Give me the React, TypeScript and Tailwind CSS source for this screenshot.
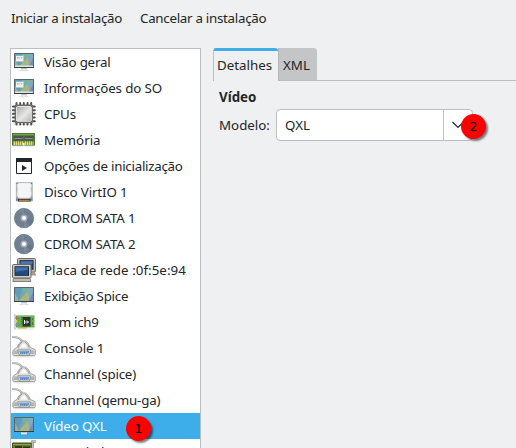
import React from 'react';

type IconProps = { children: React.ReactNode };

function Glyph({ children }: IconProps) {
  return (
    <svg width="24" height="24" viewBox="0 0 24 24" className="block shrink-0">
      {children}
    </svg>
  );
}

function Monitor({ desktop = false }: { desktop?: boolean }) {
  return (
    <Glyph>
      <ellipse cx="12" cy="20.5" rx="5" ry=".8" fill="#000" opacity=".12" />
      <path d="M9 18h6v2.500H9z" fill="#e3e5e8" />
      <path d="M9 18h6v.8H9z" fill="#b9bdc2" />
      <rect x="2" y="3" width="20" height="15" rx=".6" fill="#56666a" />
      <path d="M2 17h20v1H2z" fill="#363d43" />
      <path d="M3 4h18v13H3z" fill="#74a5ab" />
      <path d="M3 4h7l-3 13H3z" fill="#6499bd" />
      <path d="M10 4h6l-4 7z" fill="#6fb59a" />
      <path d="M7 17l5-6 3 6z" fill="#a3bb80" />
      <path d="M16 4l-4 7 5 6 4-9V4z" fill="#82abb8" />
      <path d="M12 11l4-3 1 9h-2z" fill="#b8b27a" />
      <path d="M17 17l4-9v9z" fill="#6e8dba" />
      <path d="M3 9l4 8H3z" fill="#8ab69d" />
      {desktop && (
        <>
          <path d="M4 5h7.500v6.500H4z" fill="#eef2f3" />
          <path d="M4 5h7.500v1H4z" fill="#7fb3dd" />
          <path d="M5 7h1.500v1.500H5z" fill="#e7a056" />
          <path d="M7.300 7h1.200v1.500H7.300z" fill="#e6cf60" />
          <path d="M9.200 7h1v1.500h-1z" fill="#8bc879" />
          <path d="M3 15.500h18V17H3z" fill="#dde5e5" />
        </>
      )}
    </Glyph>
  );
}

function Cpu() {
  return (
    <Glyph>
      <defs>
        <linearGradient id="cpuFace" x1="0" y1="0" x2="1" y2="1">
          <stop offset="0" stopColor="#a9a9a7" />
          <stop offset=".55" stopColor="#e6e6e4" />
          <stop offset="1" stopColor="#b4b4b2" />
        </linearGradient>
      </defs>
      <path d="M2 21h20v2.500H2z" fill="#000" opacity=".1" />
      <path
        d="M4.500 1v21.500M8.200 1v21.500M11.800 1v21.500M15.500 1v21.500M19.200 1v21.500M.8 4.500h22M.8 8.200h22M.8 11.800h22M.8 15.500h22M.8 19.200h22"
        stroke="#4d4e4a"
        strokeWidth="1.900"
        strokeLinecap="round"
      />
      <rect x="2.600" y="2.600" width="18.400" height="18.400" rx="1.500" fill="#6b6c68" />
      <rect x="4.500" y="4.500" width="14.800" height="14.800" rx="1" fill="url(#cpuFace)" stroke="#ecece9" strokeWidth=".9" />
    </Glyph>
  );
}

function Memory() {
  return (
    <Glyph>
      <path d="M1 17h22v1.500H1z" fill="#000" opacity=".12" />
      <path d="M0 5h23v12.500H0z" fill="#4b7435" />
      <path d="M1 6h21v1.200H1z" fill="#7aa653" />
      <path d="M2 8h9v4.500H2zM12.500 8h8.500v4.500h-8.500z" fill="#50524f" />
      <path d="M2.500 10h8v1h-8zM13 10h7.500v1H13z" fill="#8c908c" />
      <path d="M1 13.500h21V17H1z" fill="#8caa45" />
      <path
        d="M2.500 13.500V17M4.500 13.500V17M6.500 13.500V17M8.500 13.500V17M10.500 13.500V17M13.500 13.500V17M15.500 13.500V17M17.500 13.500V17M19.500 13.500V17"
        stroke="#e2d979"
        strokeWidth="1"
      />
      <path d="M11 15h1.500v2.500H11z" fill="#e9eee3" />
    </Glyph>
  );
}

function Boot() {
  return (
    <Glyph>
      <path d="M4.500 4.500h15v15h-15z" fill="#fcfcfc" stroke="#232629" />
      <path d="M4 4h16v4H4z" fill="#232629" />
      <path d="M10 11l5 3-5 3z" fill="#232629" />
    </Glyph>
  );
}

function Disk() {
  return (
    <Glyph>
      <rect x="3.800" y="2" width="17" height="19.500" rx="1" fill="#b1b3b3" />
      <path d="M4 17.500h16.500v3.500H4z" fill="#97999b" />
      <path
        d="M7.500 3h9.500q2.300 0 2.300 3l-.6 3 .6 4.500q-.3 4.500-3 4.500H8.200q-3 0-3-4.500l.6-4.500-.6-3q0-3 2.300-3z"
        fill="#f4f5f7"
        stroke="#dfe1e4"
        strokeWidth=".6"
      />
      <path d="M6 19h12.500v2.500H6z" fill="#353331" />
      <path d="M7 19.800h10.500v1H7z" fill="#d9952e" />
      <path d="M4.500 3h1v1h-1zM19 3h1v1h-1zM4.500 19h1v1h-1zM19 19h1v1h-1z" fill="#74777a" />
    </Glyph>
  );
}

function Cd() {
  return (
    <Glyph>
      <circle cx="12" cy="12.400" r="9.900" fill="#4c5965" opacity=".5" />
      <circle cx="12" cy="12" r="9.900" fill="#708090" />
      <path d="M12 12L8 3a10 10 0 0 1 4-.9zM12 12l4 9a10 10 0 0 1-4 .9z" fill="#798998" />
      <path d="M14 14l5 5a10 10 0 0 0 2.700-5L15 12z" fill="#677787" />
      <circle cx="12" cy="12" r="3.500" fill="#a2adb8" />
      <circle cx="12" cy="12" r="2" fill="#fff" />
    </Glyph>
  );
}

function Network() {
  return (
    <Glyph>
      <rect x="5.500" y=".5" width="18" height="13.500" rx="1" fill="#bdbdb3" stroke="#6d6d66" />
      <rect x="8" y="2.700" width="13" height="8.500" fill="#264d87" stroke="#1b2738" />
      <path d="M8.500 3.200h12v2.500l-12 2z" fill="#4974ae" />
      <path d="M16.500 14h6.500l1 3.500h-7.500z" fill="#9c9c93" />
      <rect x=".5" y="6.500" width="18.500" height="13.500" rx="1" fill="#cecec5" stroke="#686861" />
      <rect x="3" y="8.800" width="13.500" height="8.500" fill="#204b8a" stroke="#1b2738" />
      <path d="M3.500 9.300H16v2.500l-12.500 2z" fill="#4371ad" />
      <path d="M1.500 20.500H18l1 3H.8z" fill="#bcbcb3" stroke="#6d6d66" strokeWidth=".8" />
    </Glyph>
  );
}

function Sound() {
  return (
    <Glyph>
      <path d="M3 18.500h19v1H3z" fill="#000" opacity=".12" />
      <path d="M4 5.500h18.500v12H4z" fill="#69a94f" />
      <path d="M4 5.500h18.500v1H4z" fill="#8bc575" />
      <path d="M6 17h9v1.500H6z" fill="#b4b35a" />
      <path d="M2.300 4h1.200v15.500H2.300z" fill="#b5b8b6" />
      <path d="M3.500 6.500h2V9h-2z" fill="#e05067" />
      <path d="M3.500 10h2v2.500h-2z" fill="#e7c844" />
      <path d="M3.500 13.500h2v2.500h-2z" fill="#4ca4ca" />
      <path d="M9 7h1v1H9zM9 9h1v1H9zM9 11h1v1H9zM9 13h1v1H9z" fill="#417c35" />
      <path d="M10.500 7h8v9.500h-8z" fill="#26372c" />
      <path d="M12.500 10v4M12.500 12h3.500M15 10.500l1.500 1.500-1.500 1.500" stroke="#eef2ee" strokeWidth="1" fill="none" />
      <path d="M20 8h1v2h-1zM20 12h1v3h-1z" fill="#417c35" />
    </Glyph>
  );
}

function Serial() {
  return (
    <Glyph>
      <ellipse cx="12" cy="20.500" rx="11" ry="1" fill="#000" opacity=".12" />
      <path d="M0 1c5.500 0 9 1 10.500 5" fill="none" stroke="#a4a6a3" strokeWidth="2.200" />
      <path d="M0 .8c5.500 0 9 1.200 10.300 5" fill="none" stroke="#e0e1df" strokeWidth=".8" />
      <path
        d="M9.500 5h4q3 1.500 5 6.500l4.500 2q1 .8.800 2.500v2.500q-.5 1-2 1h-19.500q-1.300 0-1.500-1V16q0-1.800 1-2.500l3-2q2-4 4.700-6.500z"
        fill="#dcddda"
        stroke="#90928e"
        strokeWidth=".8"
      />
      <path d="M10 6q-3 2.500-4 6M13 6q3 2.500 4.500 6" fill="none" stroke="#9b9d99" strokeWidth="1" />
      <path d="M8 11.500l2.500-4h2.500l2.500 4z" fill="#f9f9f8" />
      <path d="M1.500 14.500h4.500v3.500H1.500zM18 14.500h4.500v3.500H18z" fill="#b3b5b2" />
      <path d="M5.800 13.800h12.800l-1.300 5.200H7.200z" fill="#ededeb" stroke="#7b7d79" strokeWidth=".7" />
      <path d="M7.200 14.800h10l-.8 3.200H8.200z" fill="#5586c6" />
      <path d="M8.500 15.600h8M9 17.200h7" stroke="#c8dcf4" strokeWidth=".7" strokeDasharray="1 1" />
    </Glyph>
  );
}

function Controller() {
  return (
    <Glyph>
      <path d="M.5 3h19v15H.5z" fill="#697a2c" stroke="#3f4c1c" />
      <path d="M1 4h18v1H1z" fill="#8d9d4b" />
      <path d="M3 6h7v4H3z" fill="#2c3618" />
      <path d="M11 6.500h7v5h-7z" fill="#29321a" />
      <path d="M24 1.500h-3.500v20" fill="none" stroke="#6e716e" strokeWidth="2.200" />
      <path d="M24 1.500h-3.500v20" fill="none" stroke="#cfd1ce" strokeWidth=".8" />
    </Glyph>
  );
}

const hardware = [
  { label: 'Visão geral', icon: <Monitor desktop />, spacing: 'tracking-[-0.2px]' },
  { label: 'Informações do SO', icon: <Monitor desktop />, spacing: 'tracking-[-0.12px]' },
  { label: 'CPUs', icon: <Cpu />, spacing: 'tracking-[-0.2px]' },
  { label: 'Memória', icon: <Memory />, spacing: 'tracking-normal' },
  { label: 'Opções de inicialização', icon: <Boot />, spacing: 'tracking-[-0.26px]' },
  { label: 'Disco VirtIO 1', icon: <Disk />, spacing: 'tracking-[-0.12px]' },
  { label: 'CDROM SATA 1', icon: <Cd />, spacing: 'tracking-[-0.16px]' },
  { label: 'CDROM SATA 2', icon: <Cd />, spacing: 'tracking-[-0.16px]' },
  { label: 'Placa de rede :0f:5e:94', icon: <Network />, spacing: 'tracking-[0.05px]' },
  { label: 'Exibição Spice', icon: <Monitor />, spacing: 'tracking-[-0.26px]' },
  { label: 'Som ich9', icon: <Sound />, spacing: 'tracking-[-0.3px]' },
  { label: 'Console 1', icon: <Serial />, spacing: 'tracking-[-0.1px]' },
  { label: 'Channel (spice)', icon: <Serial />, spacing: 'tracking-[-0.2px]' },
  { label: 'Channel (qemu-ga)', icon: <Serial />, spacing: 'tracking-[-0.18px]' },
  { label: 'Vídeo QXL', icon: <Monitor />, spacing: 'tracking-[-0.1px]', selected: true },
  { label: 'Controlador USB 0', icon: <Controller />, spacing: 'tracking-[-0.2px]' },
];

const badge =
  "absolute flex size-[25px] items-center justify-center rounded-full bg-[#ff0000] font-['DejaVu_Sans',sans-serif] text-[13px] leading-none text-black shadow-[2px_2px_2px_rgba(0,0,0,0.5)]";

export default function App() {
  return (
    <div className="flex h-[448px] w-[516px] flex-col overflow-hidden bg-[#eff0f1] font-['Noto_Sans',sans-serif] text-[13.333px] leading-[18px] text-[#232629]">
      <header className="flex h-12 shrink-0 gap-[18px] pt-[9px] pl-[11px] tracking-[-0.28px]">
        <span>Iniciar a instalação</span>
        <span>Cancelar a instalação</span>
      </header>
      <div className="flex min-h-0 flex-1 pl-[10px]">
        <ul className="w-[191px] shrink-0 overflow-hidden border border-b-0 border-[#bcbebf] bg-white">
          {hardware.map(({ label, icon, spacing, selected }) => (
            <li
              key={label}
              className={`relative flex h-[26px] items-center gap-2 pl-px whitespace-nowrap ${selected ? 'bg-[#3daee9] text-[#fcfcfc]' : ''}`}
            >
              {icon}
              <span className={spacing}>{label}</span>
              {selected && <span className={`${badge} top-[3px] left-[115px]`}>1</span>}
            </li>
          ))}
        </ul>
        <main className="ml-3 flex-1">
          <div className="flex h-[33px] border-b border-[#bcbebf]">
            <div className="-mb-px flex h-[33px] w-[65px] items-start rounded-t-[3px] border-t-[3px] border-l border-t-[#3daee9] border-l-[#bcbebf] bg-[#eff0f1] pt-[5px] pl-[3px]">
              Detalhes
            </div>
            <div className="flex h-8 w-[39px] items-start rounded-tr-[3px] border-l border-[#b4b6b7] bg-[#c4c5c6] pt-2 pl-1">
              XML
            </div>
          </div>
          <div className="pt-[7px] pl-[6px]">
            <h2 className="font-bold">Vídeo</h2>
            <div className="mt-[3px] flex items-center">
              <span className="w-[57px]">Modelo:</span>
              <div className="relative flex h-8 w-[197px] rounded-[4px] border border-[#bcbebf] bg-white">
                <span className="flex flex-1 items-center pl-2">QXL</span>
                <span className="flex w-[29px] items-center border-l border-[#bcbebf] pl-2">
                  <svg width="12" height="8" viewBox="0 0 12 8">
                    <path d="M.5 1l5.500 5.500L11.500 1" fill="none" stroke="#232629" strokeWidth="1.200" />
                  </svg>
                </span>
                <span className={`${badge} top-[4px] left-[184px]`}>2</span>
              </div>
            </div>
          </div>
        </main>
      </div>
    </div>
  );
}
